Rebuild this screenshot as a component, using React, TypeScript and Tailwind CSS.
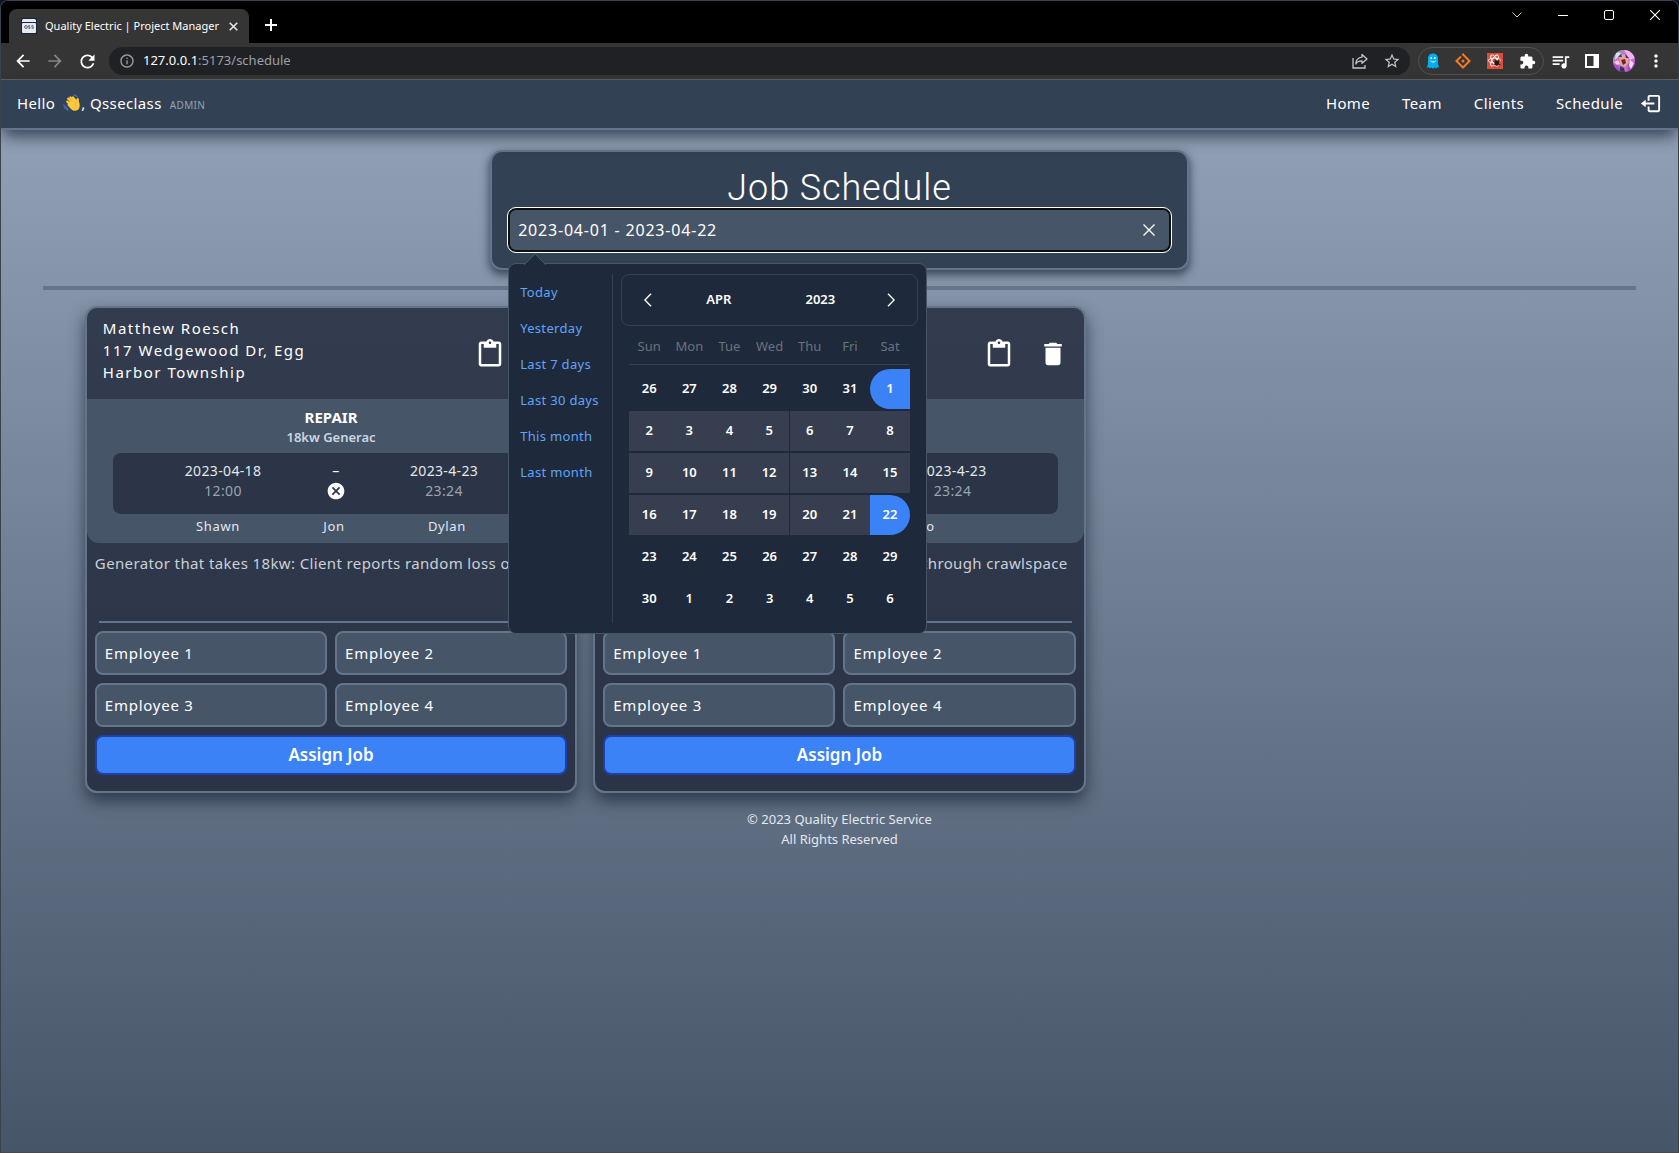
import React from "react";
import {
  MdArrowBack,
  MdArrowForward,
  MdRefresh,
  MdInfoOutline,
  MdStarBorder,
  MdExtension,
  MdQueueMusic,
  MdMoreVert,
  MdContentPaste,
  MdDelete,
  MdCancel,
} from "react-icons/md";
import { BiLogOut } from "react-icons/bi";

function Favicon() {
  return (
    <svg width="16" height="16" viewBox="0 0 16 16" aria-hidden="true">
      <rect width="16" height="16" fill="#1a2340" />
      <path d="M1 2.5A1.5 1.5 0 0 1 2.5 1h11A1.5 1.5 0 0 1 15 2.5V4H1z" fill="#e8eaf0" />
      <rect x="1" y="5" width="14" height="10" rx="1" fill="#e8eaf0" />
      <circle cx="5" cy="9" r="1.4" fill="none" stroke="#4b5470" strokeWidth="0.9" />
      <path d="M9 7.600H7.500v1.300H9v1.400H7.300M12.300 7.600h-1.500v1.300h1.500v1.400h-1.700" fill="none" stroke="#4b5470" strokeWidth="0.8" />
    </svg>
  );
}

function ShareIcon() {
  return (
    <svg width="18" height="18" viewBox="0 0 18 18" fill="none" stroke="#c4c4c4" strokeWidth="1.3" aria-hidden="true">
      <path d="M2 6v10h12v-3" />
      <path d="M11 2.5 16 7l-5 4.3V8.8C8 8.7 6 9.7 4.800 12c.2-3.600 2.200-6.400 6.200-6.800z" strokeLinejoin="round" />
    </svg>
  );
}

function GhostIcon() {
  return (
    <svg width="14" height="16" viewBox="0 0 14 16" aria-hidden="true">
      <path d="M7 .5C3.800.5 2 2.800 2 5.500V11L.8 14.500l2-.3.900 1.300 1.700-1L7 15.800l1.600-1.300 1.700 1 .9-1.300 2 .3L12 11V5.500C12 2.800 10.200.5 7 .5z" fill="#00aef0" />
      <circle cx="5.200" cy="5" r="1" fill="#fff" />
      <circle cx="8.800" cy="5" r="1" fill="#fff" />
      <path d="M4.500 7.800c1.300 1.700 3.700 1.700 5 0" stroke="#fff" strokeWidth="1" fill="none" />
    </svg>
  );
}

function DiamondIcon() {
  return (
    <svg width="16" height="16" viewBox="0 0 16 16" fill="none" stroke="#f47b20" strokeWidth="2" aria-hidden="true">
      <path d="M6 3.400 1.500 8 8 14.500 14.500 8 7.300.8" />
      <circle cx="8" cy="8" r="1.500" fill="#f47b20" stroke="none" />
    </svg>
  );
}

function ReactBugIcon() {
  return (
    <svg width="16" height="16" viewBox="0 0 16 16" aria-hidden="true">
      <rect width="16" height="16" fill="#dd4b39" />
      <g fill="none" stroke="#fff" strokeWidth="0.900">
        <ellipse cx="7.500" cy="7.500" rx="6.200" ry="2.400" />
        <ellipse cx="7.500" cy="7.500" rx="6.200" ry="2.400" transform="rotate(60 7.500 7.500)" />
        <ellipse cx="7.500" cy="7.500" rx="6.200" ry="2.400" transform="rotate(120 7.500 7.500)" />
      </g>
      <ellipse cx="9.800" cy="10" rx="2.300" ry="2.700" fill="#1c1c1c" />
      <path d="M6.500 8.500 13.500 12M13.500 8 6.500 12M8 6.500l1 1.500M12 6.500 11 8" stroke="#1c1c1c" strokeWidth="0.800" />
    </svg>
  );
}

function Avatar() {
  return (
    <svg width="22" height="22" viewBox="0 0 22 22" aria-hidden="true">
      <defs>
        <clipPath id="avatar-clip">
          <circle cx="11" cy="11" r="11" />
        </clipPath>
      </defs>
      <g clipPath="url(#avatar-clip)">
        <rect width="22" height="22" fill="#cf6ad2" />
        <path d="M0 0h11L7 6 3 8 0 14z" fill="#8f9ab5" />
        <path d="M3 2l5 1-2 3-4 4z" fill="#d8dfea" />
        <path d="M11 0h11v8l-5 2-3-5z" fill="#f0b4f2" />
        <path d="M6 6l5-2 4 3 1 5-4 5-5-2z" fill="#d9a999" />
        <path d="M8 10l4-1 1 4-3 2z" fill="#7a1b2a" />
        <path d="M5 7l3-3 1 3zM12 4l4 4-3 0z" fill="#4d3358" />
        <path d="M0 14l5 1 3 7H0zM15 14l7-3v11h-8z" fill="#a24fd0" />
        <path d="M17 10l4 3-3 6-2-3z" fill="#f6d5f7" />
        <path d="M1 12l4-2 2 4-3 1z" fill="#f3c3ee" />
        <path d="M7 16l4 2 1 4H7z" fill="#3a3157" />
      </g>
    </svg>
  );
}

function WavingHand() {
  return (
    <svg width="18" height="18" viewBox="0 0 18 18" role="img" aria-label="waving hand">
      <g stroke="#ffc83d" strokeWidth="2.300" strokeLinecap="round" fill="none">
        <path d="M9.500 9 5.300 4.600" />
        <path d="M11 7.500 7.500 3.400" />
        <path d="M12.500 7 10 3.400" />
        <path d="M8 11 4.300 7.600" />
        <path d="M14.600 8.500V5.200" />
      </g>
      <path d="M5.500 9 12 5.500l3.700 1.500c1.600 4 1.300 7.500-1.200 9.100-2.600 1.600-5 .4-7-1.700L4.400 11z" fill="#ffc83d" />
      <path d="M14.500 8c-2 .3-2.600 1.800-2 3.500" stroke="#e09b1f" strokeWidth="0.700" fill="none" />
      <g stroke="#3b6fb6" strokeWidth="1.300" strokeLinecap="round" fill="none">
        <path d="M1 11c.3 2.500 1.600 4.300 4 5.200M2.800 12.500c.4 1 1 1.700 1.800 2.100" />
        <path d="M11 1c1.500.1 2.500.7 3.200 1.800" />
      </g>
    </svg>
  );
}

function BrowserChrome() {
  return (
    <div className="font-['Noto_Sans','Open_Sans',sans-serif]">
      <div className="flex h-[42px] items-end bg-black pl-2">
        <div className="flex h-[34px] w-60 items-center rounded-t-lg bg-[#353535] pr-2 pl-3">
          <Favicon />
          <span className="ml-2 flex-1 text-[11px] whitespace-nowrap text-white">Quality Electric | Project Manager</span>
          <button aria-label="Close tab" className="flex size-4 items-center justify-center">
            <svg width="9" height="9" viewBox="0 0 9 9" stroke="#e6e6e6" strokeWidth="1.600">
              <path d="M.7.7l7.600 7.600M8.300.7.7 8.300" />
            </svg>
          </button>
        </div>
        <button aria-label="New tab" className="mb-2 ml-3 flex size-5 items-center justify-center">
          <svg width="12" height="12" viewBox="0 0 12 12" stroke="#fff" strokeWidth="2">
            <path d="M6 0v12M0 6h12" />
          </svg>
        </button>
        <div className="ml-auto flex self-start text-white">
          <button aria-label="Search tabs" className="flex h-7 w-[46px] items-center justify-center">
            <svg width="10" height="6" viewBox="0 0 10 6" fill="none" stroke="#cfcfcf">
              <path d="M.5.5 5 5 9.500.5" />
            </svg>
          </button>
          <button aria-label="Minimize" className="flex h-7 w-[46px] items-center justify-center">
            <svg width="10" height="2" viewBox="0 0 10 2"><rect y="1" width="10" height="1" fill="#fff" /></svg>
          </button>
          <button aria-label="Maximize" className="flex h-7 w-[46px] items-center justify-center">
            <svg width="10" height="10" viewBox="0 0 10 10" fill="none" stroke="#fff">
              <rect x=".5" y=".5" width="9" height="9" rx="1.500" />
            </svg>
          </button>
          <button aria-label="Close window" className="flex h-7 w-[46px] items-center justify-center">
            <svg width="10" height="10" viewBox="0 0 10 10" stroke="#fff" strokeWidth="1.100">
              <path d="M0 0l10 10M10 0 0 10" />
            </svg>
          </button>
        </div>
      </div>
      <div className="flex h-[37px] items-center border-b border-[#5f5f5f] bg-[#353535] px-1.5 text-white">
        <button aria-label="Back" className="flex w-8 justify-center"><MdArrowBack size={20} /></button>
        <button aria-label="Forward" className="flex w-8 justify-center text-[#868686]"><MdArrowForward size={20} /></button>
        <button aria-label="Reload" className="flex w-8 justify-center"><MdRefresh size={21} /></button>
        <div className="ml-1.5 flex h-7 flex-1 items-center rounded-full bg-[#202124] pr-0.5 pl-2.5">
          <MdInfoOutline size={16} className="text-[#9aa0a6]" />
          <span className="ml-2 text-[13px] text-white">
            127.0.0.1<span className="text-[#9aa0a6]">:5173/schedule</span>
          </span>
          <button aria-label="Share" className="ml-auto flex w-8 justify-center"><ShareIcon /></button>
          <button aria-label="Bookmark" className="flex w-8 justify-center text-[#c4c4c4]"><MdStarBorder size={18} /></button>
        </div>
        <div className="ml-2 flex h-7 items-center rounded-full border border-[#505154]">
          <button aria-label="Ghostery" className="flex w-7 justify-center"><GhostIcon /></button>
          <button aria-label="Diamond extension" className="flex w-8 justify-center"><DiamondIcon /></button>
          <button aria-label="React Developer Tools" className="flex w-8 justify-center"><ReactBugIcon /></button>
          <button aria-label="Extensions" className="flex w-8 justify-center"><MdExtension size={17} /></button>
        </div>
        <button aria-label="Media" className="flex w-8 justify-center"><MdQueueMusic size={21} /></button>
        <button aria-label="Side panel" className="flex w-8 justify-center">
          <svg width="14" height="14" viewBox="0 0 14 14">
            <path d="M0 0h14v14H0zM2 2v10h6.500V2z" fill="#fff" fillRule="evenodd" />
          </svg>
        </button>
        <button aria-label="Profile" className="flex w-8 justify-center"><Avatar /></button>
        <button aria-label="Menu" className="flex w-8 justify-center"><MdMoreVert size={20} /></button>
      </div>
    </div>
  );
}

function NavBar() {
  return (
    <nav className="relative z-10 flex h-[50px] items-center justify-between border-b-2 border-[#64748b] bg-[#334155] px-4 pb-0.5 text-[15px] tracking-wide text-white shadow-[0_8px_16px_-2px_rgba(30,41,59,0.8)]">
      <p className="flex items-center">
        <span>Hello</span>
        <span className="ml-2"><WavingHand /></span>
        <span>, Qsseclass</span>
        <span className="mt-1 ml-2 text-[10px] text-[#94a3b8]">ADMIN</span>
      </p>
      <div className="flex items-center">
        <div className="flex gap-8">
          <a href="#home">Home</a>
          <a href="#team">Team</a>
          <a href="#clients">Clients</a>
          <a href="#schedule">Schedule</a>
        </div>
        <button aria-label="Log out" className="ml-4"><BiLogOut size={23} /></button>
      </div>
    </nav>
  );
}

const presets = ["Today", "Yesterday", "Last 7 days", "Last 30 days", "This month", "Last month"];
const weekdays = ["Sun", "Mon", "Tue", "Wed", "Thu", "Fri", "Sat"];
const days = [
  26, 27, 28, 29, 30, 31, 1,
  2, 3, 4, 5, 6, 7, 8,
  9, 10, 11, 12, 13, 14, 15,
  16, 17, 18, 19, 20, 21, 22,
  23, 24, 25, 26, 27, 28, 29,
  30, 1, 2, 3, 4, 5, 6,
];
const rangeStart = 6;
const rangeEnd = 27;

function dayClass(index: number) {
  if (index === rangeStart) return "h-10 rounded-l-full bg-[#3b82f6]";
  if (index === rangeEnd) return "h-10 rounded-r-full bg-[#3b82f6]";
  if (index > rangeStart && index < rangeEnd) {
    return index % 7 === 3 ? "h-10 border-r border-[#1e293b] bg-[#363e4f]" : "h-10 bg-[#363e4f]";
  }
  return "h-10";
}

function Chevron({ d }: { d: string }) {
  return (
    <svg width="8" height="14" viewBox="0 0 8 14" fill="none" stroke="#fff" strokeWidth="1.400" aria-hidden="true">
      <path d={d} />
    </svg>
  );
}

function DatePopover() {
  return (
    <div className="absolute top-[55px] left-0 z-20 flex w-[419px] rounded-lg border border-[#475569] bg-[#1e293b] py-2.5 pr-2 pl-2.5 text-[13px]">
      <svg className="absolute -top-[11px] left-[14px]" width="24" height="12" viewBox="0 0 24 12" aria-hidden="true">
        <path d="M1 12 12 1l11 11" fill="#1e293b" stroke="#475569" />
      </svg>
      <ul className="w-[94px] shrink-0 border-r border-[#374151] pt-px pl-px tracking-wide">
        {presets.map((label) => (
          <li key={label}>
            <button className="h-9 whitespace-nowrap text-[#60a5fa]">{label}</button>
          </li>
        ))}
      </ul>
      <div className="ml-2 flex-1">
        <div className="flex h-[52px] items-center rounded-lg border border-[#374151] px-1.5 font-semibold text-white">
          <button aria-label="Previous month" className="flex h-9 w-10 items-center justify-center">
            <Chevron d="M7 .7.9 7 7 13.300" />
          </button>
          <button className="flex-1">APR</button>
          <button className="flex-1">2023</button>
          <button aria-label="Next month" className="flex h-9 w-10 items-center justify-center">
            <Chevron d="M1 .7 7.100 7 1 13.300" />
          </button>
        </div>
        <div className="mx-2 grid grid-cols-7 border-b border-[#374151] pt-2.5 pb-2 text-center leading-5 text-[#6b7280]">
          {weekdays.map((day) => (
            <span key={day}>{day}</span>
          ))}
        </div>
        <div className="mx-2 my-1 grid grid-cols-7 gap-y-0.5 font-semibold text-white">
          {days.map((day, index) => (
            <button key={index} className={dayClass(index)}>
              {day}
            </button>
          ))}
        </div>
      </div>
    </div>
  );
}

function ScheduleHeader() {
  return (
    <section className="mx-auto mt-5 w-5/12 rounded-xl border-2 border-[#64748b] bg-[#334155] p-4 shadow-[0_4px_8px_1px_rgba(30,41,59,0.7)]">
      <h1 className="text-center font-['Roboto',sans-serif] text-4xl leading-10 font-light tracking-wide text-white">
        Job Schedule
      </h1>
      <div className="relative">
        <input
          aria-label="Date range"
          defaultValue="2023-04-01 - 2023-04-22"
          className="block h-11 w-full rounded-lg border-2 border-[#101010] bg-[#475569] px-2 text-[16px] tracking-wider text-white outline outline-white"
        />
        <button aria-label="Clear dates" className="absolute inset-y-0 right-0 flex w-11 items-center justify-center">
          <svg width="12" height="12" viewBox="0 0 12 12" stroke="#fff" strokeWidth="1.300">
            <path d="M.5.5l11 11M11.500.5l-11 11" />
          </svg>
        </button>
        <DatePopover />
      </div>
    </section>
  );
}

type Job = {
  client: string;
  address: string;
  kind: string;
  unit: string;
  start: string;
  startTime: string;
  end: string;
  endTime: string;
  crew: string[];
  notes: string;
  notesRight: boolean;
};

const jobs: Job[] = [
  {
    client: "Matthew Roesch",
    address: "117 Wedgewood Dr, Egg Harbor Township",
    kind: "REPAIR",
    unit: "18kw Generac",
    start: "2023-04-18",
    startTime: "12:00",
    end: "2023-4-23",
    endTime: "23:24",
    crew: ["Shawn", "Jon", "Dylan"],
    notes: "Generator that takes 18kw: Client reports random loss of",
    notesRight: false,
  },
  {
    client: "",
    address: "",
    kind: "",
    unit: "",
    start: "",
    startTime: "",
    end: "2023-4-23",
    endTime: "23:24",
    crew: ["Shawn", "Leo"],
    notes: "through crawlspace",
    notesRight: true,
  },
];

function JobCard({ job, id }: { job: Job; id: number }) {
  return (
    <article className="overflow-hidden rounded-xl border-2 border-[#64748b] bg-linear-to-b/srgb from-[#333c4e] to-[#2b3446] shadow-[0_8px_16px_0_rgba(30,41,59,0.75)]">
      <header className="flex h-[91px] items-center px-4">
        <div className="mb-2 w-60 text-[15px] leading-[22px] tracking-widest text-white">
          <p>{job.client}</p>
          <p>{job.address}</p>
        </div>
        <div className="ml-auto flex items-center gap-6 text-white">
          <button aria-label="Copy job"><MdContentPaste size={30} /></button>
          <button aria-label="Delete job"><MdDelete size={30} /></button>
        </div>
      </header>
      <div className="h-36 rounded-b-xl bg-[#475569] px-[26px] pt-2 text-center">
        <h2 className="h-5 text-[15px] leading-5 font-bold text-white">{job.kind}</h2>
        <p className="h-5 text-[13px] leading-5 font-semibold text-[#cbd5e1]">{job.unit}</p>
        <div className="mt-1.5 flex h-[61px] justify-center gap-15 rounded-lg bg-[#2b3547] pt-2 text-[14px] leading-5 tracking-wide whitespace-nowrap">
          <div className="w-[86px]">
            <p className="text-[#e5e7eb]">{job.start}</p>
            <p className="text-[#9ca3af]">{job.startTime}</p>
          </div>
          <div className="flex w-5 flex-col items-center text-white">
            <span className="h-5">{job.start && "–"}</span>
            <button aria-label="Clear job dates"><MdCancel size={20} /></button>
          </div>
          <div className="w-[76px]">
            <p className="text-[#e5e7eb]">{job.end}</p>
            <p className="text-[#9ca3af]">{job.endTime}</p>
          </div>
        </div>
        <div className="flex justify-evenly text-[13px] leading-6 tracking-wider text-[#e2e8f0]">
          {job.crew.map((name) => (
            <span key={name}>{name}</span>
          ))}
        </div>
      </div>
      <p className={job.notesRight ? "h-[78px] px-4 pt-2 text-right text-[15px] leading-6 tracking-wide text-[#cbd0d8]" : "h-[78px] overflow-hidden px-2 pt-2 text-[15px] leading-6 tracking-wide whitespace-nowrap text-[#cbd0d8]"}>
        {job.notes}
      </p>
      <hr className="mx-3 border-t-2 border-[#64748b]" />
      <form className="grid grid-cols-2 gap-2 p-2 pb-4">
        {[1, 2, 3, 4].map((n) => (
          <input
            key={n}
            aria-label={`Job ${id} employee ${n}`}
            placeholder={`Employee ${n}`}
            className="h-11 w-full min-w-0 rounded-lg border-2 border-[#64748b] bg-[#475569] px-2 text-[15px] tracking-wider text-white placeholder:text-white"
          />
        ))}
        <button type="button" className="col-span-2 h-10 rounded-lg border-2 border-[#1e40af] bg-[#3b82f6] text-[17px] font-semibold text-white">
          Assign Job
        </button>
      </form>
    </article>
  );
}

export default function App() {
  return (
    <div className="flex min-h-screen flex-col bg-[#0b1524]">
      <div className="flex flex-1 flex-col overflow-hidden rounded-t-lg border border-[#3a424e] border-b-[#4a4848] bg-black">
        <BrowserChrome />
        <div className="flex flex-1 flex-col bg-linear-to-b/srgb from-[#94a3b8] to-[#475569] font-['Noto_Sans','Open_Sans',sans-serif]">
          <NavBar />
          <main>
            <ScheduleHeader />
            <hr className="mx-auto my-4 w-[95%] border-t-4 border-[#64748b]" />
            <div className="mx-auto grid w-[90%] grid-cols-3 gap-4">
              {jobs.map((job, index) => (
                <JobCard key={index} job={job} id={index + 1} />
              ))}
            </div>
          </main>
          <footer className="mt-4 text-center text-[13px] leading-5 text-[#e2e8f0]">
            <p>© 2023 Quality Electric Service</p>
            <p>All Rights Reserved</p>
          </footer>
        </div>
      </div>
    </div>
  );
}
